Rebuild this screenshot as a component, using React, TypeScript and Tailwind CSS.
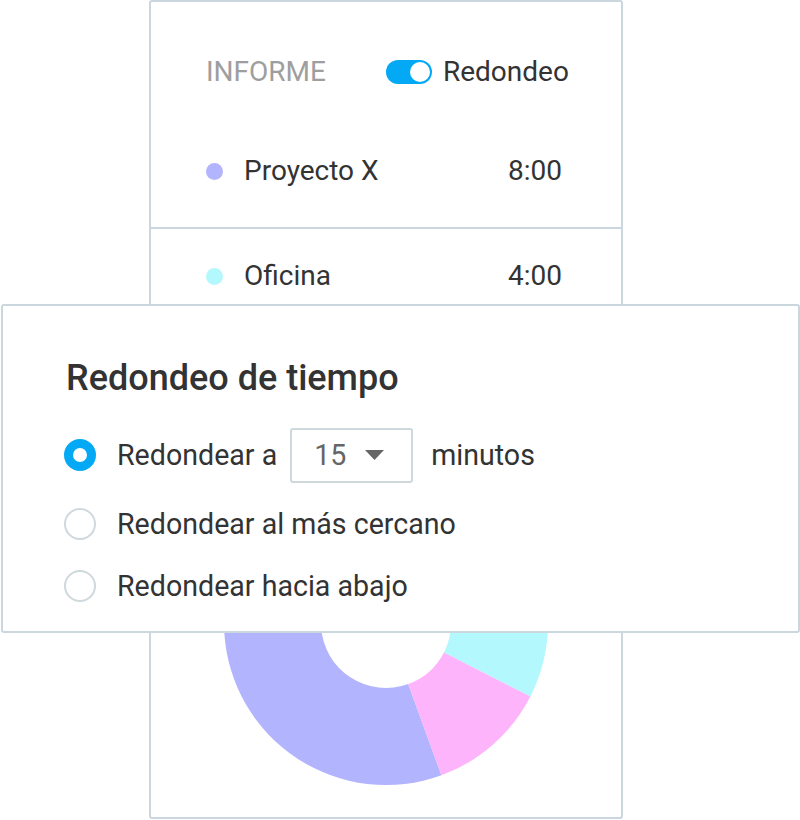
import React from "react";

const CX = 162;
const CY = 162;
const R_OUT = 162;
const R_IN = 65;

// donut slice, angles in degrees clockwise from 3 o'clock
function slice(a0: number, a1: number) {
  const rad = (a: number) => (a * Math.PI) / 180;
  const p = (r: number, a: number) =>
    `${(CX + r * Math.cos(rad(a))).toFixed(2)} ${(CY + r * Math.sin(rad(a))).toFixed(2)}`;
  const large = a1 - a0 > 180 ? 1 : 0;
  return [
    `M ${p(R_OUT, a0)}`,
    `A ${R_OUT} ${R_OUT} 0 ${large} 1 ${p(R_OUT, a1)}`,
    `L ${p(R_IN, a1)}`,
    `A ${R_IN} ${R_IN} 0 ${large} 0 ${p(R_IN, a0)}`,
    "Z",
  ].join(" ");
}

const segments = [
  { from: 70, to: 283, color: "#b3b4fe" },
  { from: 283, to: 387, color: "#b3f8fd" },
  { from: 27, to: 70, color: "#feb4fa" },
];

function Radio({ checked }: { checked?: boolean }) {
  return checked ? (
    <span className="w-8 h-8 rounded-full border-[9px] border-[#03a9f4] bg-white shrink-0" />
  ) : (
    <span className="w-8 h-8 rounded-full border-2 border-[#cfd8dc] bg-white shrink-0" />
  );
}

export default function App() {
  return (
    <div className="relative w-[800px] h-[820px] bg-white font-['Roboto',sans-serif] text-[#333333]">
      {/* report card */}
      <div className="ml-[149px] w-[474px] h-[819px] border-2 border-[#cad7df] rounded-[3px] flex flex-col">
        <div className="mt-[46px] h-12 pl-[55px] flex items-center text-[28px] leading-none">
          <span className="text-[#9e9e9e]">INFORME</span>
          <span className="ml-[60px] relative w-[46px] h-6 rounded-full bg-[#03a9f4]">
            <span className="absolute right-[2px] top-[2px] w-5 h-5 rounded-full bg-white" />
          </span>
          <span className="ml-[11px]">Redondeo</span>
        </div>

        <div className="mt-[51px] h-12 pl-[55px] pr-[59px] flex items-center text-[28px] leading-none">
          <span className="w-[17px] h-[17px] rounded-full bg-[#b3b4fe]" />
          <span className="ml-[21px]">Proyecto X</span>
          <span className="ml-auto">8:00</span>
        </div>

        <div className="mt-[32px] h-[2px] bg-[#cad7df]" />

        <div className="mt-[23px] h-12 pl-[55px] pr-[59px] flex items-center text-[28px] leading-none">
          <span className="w-[17px] h-[17px] rounded-full bg-[#b3f8fd]" />
          <span className="ml-[21px]">Oficina</span>
          <span className="ml-auto">4:00</span>
        </div>

        <div className="mt-[161px] flex justify-center">
          <svg width="324" height="324" viewBox="0 0 324 324">
            {segments.map((s, i) => (
              <path key={i} d={slice(s.from, s.to)} fill={s.color} />
            ))}
          </svg>
        </div>
      </div>

      {/* rounding popover */}
      <div className="absolute left-px top-[304px] w-[799px] h-[329px] bg-white border-2 border-[#cad7df] rounded-[3px] pl-[61px] flex flex-col">
        <h2 className="mt-[54px] ml-[2px] text-[36px] leading-none font-medium text-[#333333]">
          Redondeo de tiempo
        </h2>

        <div className="mt-[31px] h-14 flex items-center text-[28.6px] leading-none">
          <Radio checked />
          <span className="ml-[21px]">Redondear a</span>
          <div className="ml-[13px] w-[123px] h-[55px] border-2 border-[#cfd8dc] rounded-[3px] flex items-center pl-[22px]">
            <span className="text-[#666666]">15</span>
            <svg className="ml-[19px]" width="19" height="10" viewBox="0 0 19 10">
              <path d="M0 0 L19 0 L9.5 10 Z" fill="#666666" />
            </svg>
          </div>
          <span className="ml-[18px]">minutos</span>
        </div>

        <div className="mt-[21px] h-10 flex items-center text-[28.6px] leading-none">
          <Radio />
          <span className="ml-[21px]">Redondear al más cercano</span>
        </div>

        <div className="mt-[22px] h-10 flex items-center text-[28.6px] leading-none">
          <Radio />
          <span className="ml-[21px]">Redondear hacia abajo</span>
        </div>
      </div>
    </div>
  );
}
